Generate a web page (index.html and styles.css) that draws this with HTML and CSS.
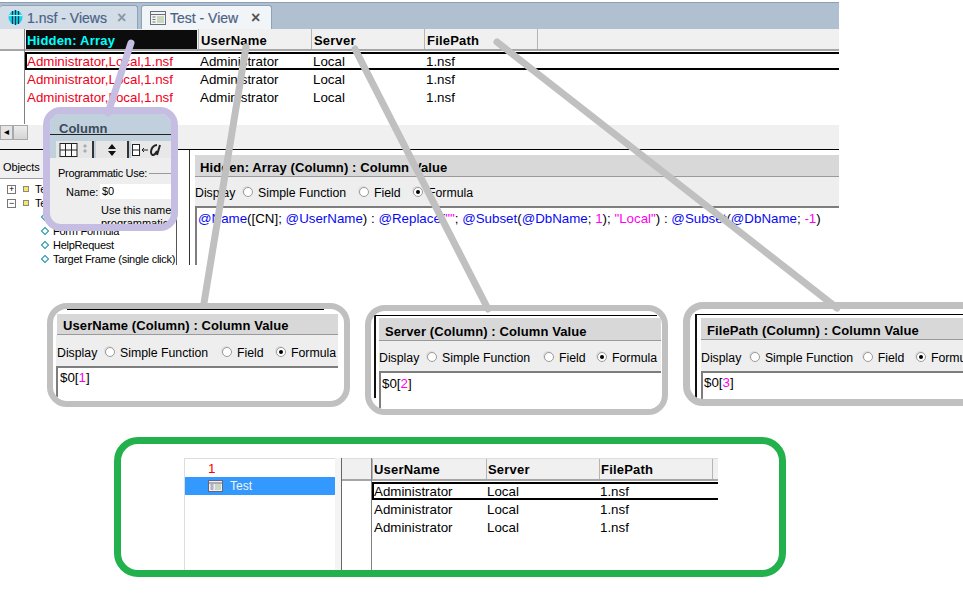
FILE: index.html
```html
<!DOCTYPE html>
<html lang="en">
<head>
<meta charset="utf-8">
<title>Test - View</title>
<link rel="stylesheet" href="styles.css">
</head>
<body>
<div class="page">
  <section class="window">
    <div class="tabbar">
      <div class="tab tab-a">
        <svg class="tab-icon" width="15" height="15" viewBox="0 0 15 15"><circle cx="7.500" cy="7.500" r="7" fill="#19d4e4"/><path d="M4.500 1v13M7.500 0v15M10.500 1v13" stroke="#08385c" stroke-width="1.300"/><path d="M1 5.500h13" stroke="#bff" stroke-width="1.200"/></svg>
        <span class="tab-label">1.nsf - Views</span><span class="tab-x">×</span>
      </div>
      <div class="tab tab-b">
        <svg class="tab-icon" width="16" height="14" viewBox="0 0 16 14"><rect x="0.500" y="0.500" width="15" height="13" fill="#f4f4f0" stroke="#666f80"/><path d="M1 3.500h14" stroke="#666f80"/><path d="M2.500 6h3M2.500 8.500h3M2.500 11h3" stroke="#777"/><rect x="7" y="5" width="7" height="7" fill="#c8d8c0"/></svg>
        <span class="tab-label">Test - View</span><span class="tab-x">×</span>
      </div>
    </div>
    <div class="view">
      <div class="grid-row head">
        <div class="head-gutter"></div>
        <div class="head-cell hidden-wrap"><span class="hidden-cell">Hidden: Array</span></div>
        <div class="head-cell">UserName</div>
        <div class="head-cell">Server</div>
        <div class="head-cell">FilePath</div>
        <div class="head-rest"></div>
      </div>
      <div class="rows">
        <div class="grid-row row selected"><div></div><div class="red">Administrator,Local,1.nsf</div><div>Administrator</div><div>Local</div><div>1.nsf</div><div></div></div>
        <div class="grid-row row"><div></div><div class="red">Administrator,Local,1.nsf</div><div>Administrator</div><div>Local</div><div>1.nsf</div><div></div></div>
        <div class="grid-row row"><div></div><div class="red">Administrator,Local,1.nsf</div><div>Administrator</div><div>Local</div><div>1.nsf</div><div></div></div>
      </div>
    </div>
    <div class="scrollstrip">
      <span class="sb-btn">◂</span><span class="sb-thumb"></span>
    </div>
    <div class="lower">
      <div class="objects">
        <div class="objects-tab">Objects</div>
        <div class="tree">
          <div class="tree-row"><span class="expander">+</span><span class="yellow"></span>Te</div>
          <div class="tree-row"><span class="expander">−</span><span class="yellow"></span>Te</div>
          <div class="tree-row leaf"><span class="diamond"></span>programmatic</div>
          <div class="tree-row leaf"><span class="diamond"></span>Form Formula</div>
          <div class="tree-row leaf"><span class="diamond"></span>HelpRequest</div>
          <div class="tree-row leaf"><span class="diamond"></span>Target Frame (single click)</div>
        </div>
      </div>
      <div class="fpanel main-panel">
        <div class="ftitle">Hidden: Array (Column) : Column Value</div>
        <div class="fdisplay main-display">
          <span>Display</span>
          <span class="radio"></span><span>Simple Function</span>
          <span class="radio"></span><span>Field</span>
          <span class="radio on"></span><span>Formula</span>
        </div>
        <div class="feditor main-editor"><span class="kw">@Name</span>([CN]; <span class="kw">@UserName</span>) : <span class="kw">@Replace</span>(<span class="lit">""</span>; <span class="kw">@Subset</span>(<span class="kw">@DbName</span>; <span class="lit">1</span>); <span class="lit">"Local"</span>) : <span class="kw">@Subset</span>(<span class="kw">@DbName</span>; <span class="lit">-1</span>)</div>
      </div>
    </div>
    <aside class="popup">
      <div class="popup-title">Column</div>
      <div class="popup-tools">
        <span class="tool tool-a"><svg width="36" height="16" viewBox="0 0 36 16"><rect x="4" y="1.500" width="17" height="13" fill="#f8f8f8" stroke="#222"/><path d="M9.500 2v12M15.500 2v12M4 8h17" stroke="#222"/><path d="M29 2l2 2-2 2-2-2zM29 7l2 2-2 2-2-2z" fill="#aaa"/></svg></span>
        <span class="tool tool-b"><svg width="14" height="14" viewBox="0 0 14 14"><path d="M7 1l4 5H3zM7 13l4-5H3z" fill="#111"/></svg></span>
        <span class="tool tool-c"><svg width="40" height="16" viewBox="0 0 40 16"><rect x="1.500" y="2.500" width="7" height="11" fill="#fff" stroke="#222"/><path d="M2 8h6M17 8h-6M11 8l2-2M11 8l2 2" stroke="#222"/><path d="M26 3c-4 0-6 4-6 7s2 4 4 2l2-3M29 3l-3 10" stroke="#222" stroke-width="2" fill="none"/></svg></span>
      </div>
      <div class="popup-body">
        <div class="popup-legend"><span>Programmatic Use:</span><i></i></div>
        <div class="popup-name"><span>Name:</span><span class="name-input">$0</span></div>
        <div class="popup-help">Use this name<br>programmatic</div>
      </div>
    </aside>
  </section>

  <section class="callouts">
    <div class="callout c-user">
      <div class="rule"></div>
      <div class="fpanel">
        <div class="ftitle">UserName (Column) : Column Value</div>
        <div class="fdisplay"><span>Display</span><span class="radio"></span><span>Simple Function</span><span class="radio"></span><span>Field</span><span class="radio on"></span><span>Formula</span></div>
        <div class="feditor">$0[<span class="lit">1</span>]</div>
      </div>
    </div>
    <div class="callout c-server">
      <div class="rule"></div>
      <div class="fpanel">
        <div class="ftitle">Server (Column) : Column Value</div>
        <div class="fdisplay"><span>Display</span><span class="radio"></span><span>Simple Function</span><span class="radio"></span><span>Field</span><span class="radio on"></span><span>Formula</span></div>
        <div class="feditor">$0[<span class="lit">2</span>]</div>
      </div>
    </div>
    <div class="callout c-file">
      <div class="rule"></div>
      <div class="fpanel">
        <div class="ftitle">FilePath (Column) : Column Value</div>
        <div class="fdisplay"><span>Display</span><span class="radio"></span><span>Simple Function</span><span class="radio"></span><span>Field</span><span class="radio on"></span><span>Formula</span></div>
        <div class="feditor">$0[<span class="lit">3</span>]</div>
      </div>
    </div>
  </section>

  <section class="result">
    <div class="app">
      <div class="nav">
        <div class="nav-row nav-db">1</div>
        <div class="nav-row nav-sel">
          <svg width="15" height="12" viewBox="0 0 15 12"><rect x="0.500" y="0.500" width="14" height="11" fill="#eef" stroke="#667"/><path d="M1 3h13" stroke="#667"/><path d="M2.500 5h3M2.500 7h3M2.500 9h3" stroke="#777"/><rect x="7" y="4" width="6" height="6" fill="#c8d8c0"/></svg>
          <span>Test</span>
        </div>
      </div>
      <div class="splitter"></div>
      <div class="app-view">
        <div class="app-grid head">
          <div class="head-gutter"></div>
          <div class="head-cell">UserName</div>
          <div class="head-cell">Server</div>
          <div class="head-cell">FilePath</div>
          <div class="head-rest"></div>
        </div>
        <div class="rows">
          <div class="app-grid row selected"><div></div><div>Administrator</div><div>Local</div><div>1.nsf</div><div></div></div>
          <div class="app-grid row"><div></div><div>Administrator</div><div>Local</div><div>1.nsf</div><div></div></div>
          <div class="app-grid row"><div></div><div>Administrator</div><div>Local</div><div>1.nsf</div><div></div></div>
        </div>
      </div>
    </div>
  </section>

  <svg class="arrows" width="963" height="599" viewBox="0 0 963 599" aria-hidden="true">
    <path class="arrow-lilac" d="M131 43L108 113"/>
    <path class="arrow-gray" d="M246 47L204 303"/>
    <path class="arrow-gray" d="M355 49L488 309"/>
    <path class="arrow-gray" d="M497 42L837 308"/>
  </svg>
</div>
</body>
</html>
```
FILE: styles.css
```css
* { box-sizing: border-box; }
html, body { margin: 0; padding: 0; background: #fff; }
body { font-family: "Liberation Sans", Arial, sans-serif; font-size: 14px; color: #000; overflow: hidden; }
.page { position: relative; width: 963px; height: 599px; overflow: hidden; }

/* main window */
.window { position: relative; width: 839px; height: 265px; display: flex; flex-direction: column; }
.tabbar { height: 27px; margin-top: 2px; background: #b0c0d1; border-top: 1px solid #8ca0b4; display: flex; gap: 3px; align-items: flex-end; flex: none; }
.tab { height: 24px; border: 1px solid #8ea3b8; border-bottom: 0; border-radius: 3px 3px 0 0; display: flex; align-items: center; font-size: 14px; color: #4a6285; -webkit-text-stroke: 0.2px #4a6285; }
.tab-a { width: 138px; background: #d3dde8; padding-left: 8px; border-left: 0; }
.tab-b { width: 131px; background: #f2f5f8; padding-left: 8px; }
.tab-icon { flex: none; margin-right: 4px; }
.tab-label { flex: 1; }
.tab-x { font-size: 16px; font-weight: 700; color: #8b97a4; width: 20px; -webkit-text-stroke: 0; }
.tab-b .tab-x { color: #555; }

.view { height: 94px; flex: none; position: relative; }
.view::before { content: ""; position: absolute; left: 24px; top: 0; bottom: -1px; width: 1px; background: #808080; }
.grid-row { display: grid; grid-template-columns: 24px 174px 113px 113px 113px 1fr; }
.head { height: 22px; background: #f0f0f0; border-bottom: 2px solid #a6a6a6; font-weight: 700; font-size: 13px; }
.head-cell { border-left: 1px solid #b5b5b5; padding: 3px 0 0 1px; height: 20px; line-height: 18px; letter-spacing: 0.2px; }
.grid-row .head-cell { padding-left: 2px; }
.grid-row .hidden-wrap { padding: 1px 1px 0 1px; }
.head-gutter { background: #f0f0f0; }
.head-rest { border-left: 1px solid #b5b5b5; }
.hidden-cell { display: block; height: 19px; background: #0c0c0c; color: #0ff; padding: 2px 0 0 1px; }
.rows { padding-top: 1px; }
.row { height: 18px; line-height: 17px; font-size: 13.330px; }
.row > div { padding: 1px 0 0 1px; white-space: nowrap; overflow: hidden; }
.grid-row.row > div { padding-left: 2px; }
.grid-row.row > div:nth-child(2) { padding-left: 3px; }
.app-grid.row > div:nth-child(2) { padding-left: 2px; }
.row.selected { line-height: 14px; }
.row.selected > div:not(:first-child) { border-top: 2px solid #000; border-bottom: 2px solid #000; }
.grid-row.row.selected > div:nth-child(2) { border-left: 2px solid #000; margin-left: 1px; padding-left: 0; }
.red { color: #f00018; }

.scrollstrip { height: 25px; flex: none; margin-top: 2px; background: #f0f0f0; display: flex; align-items: flex-start; border-bottom: 1px solid #000; }
.sb-btn { width: 13px; height: 15px; background: #e4e4e4; border: 1px solid #a8a8a8; font-size: 10px; line-height: 12px; text-align: center; }
.sb-thumb { width: 15px; height: 15px; background: linear-gradient(#ececec, #d4d4d4); border: 1px solid #a8a8a8; }

.lower { flex: 1; display: flex; min-height: 0; overflow: hidden; }
.objects { width: 177px; flex: none; background: #f0f0f0; padding-top: 7px; display: flex; flex-direction: column; }
.objects-tab { width: 44px; height: 21px; padding-left: 3px; font-size: 11px; letter-spacing: -0.1px; line-height: 20px; }
.tree { flex: 1; background: #fff; border-top: 1px solid #a0a0a0; border-right: 1px solid #555; font-size: 11px; letter-spacing: -0.25px; padding-top: 3px; overflow: hidden; }
.tree-row { height: 14px; line-height: 14px; display: flex; align-items: center; padding-left: 7px; white-space: nowrap; }
.tree-row.leaf { padding-left: 41px; }
.expander { flex: none; width: 9px; height: 9px; border: 1px solid #777; font-size: 9px; line-height: 7px; text-align: center; margin-right: 7px; }
.yellow { flex: none; width: 6px; height: 6px; background: #f4e860; border: 1px solid #888; margin-right: 6px; }
.diamond { flex: none; width: 6px; height: 6px; transform: rotate(45deg); border: 1px solid #1590a8; margin: 0 5px 0 1px; background: #fff; }

/* formula panels */
.fpanel { display: flex; flex-direction: column; }
.ftitle { height: 21px; background: #d8d8d8; border-bottom: 1px solid #9a9a9a; font-weight: 700; font-size: 13px; line-height: 23px; padding-left: 6px; letter-spacing: 0.1px; white-space: nowrap; }
.fdisplay { height: 31px; background: #eee; display: flex; align-items: center; font-size: 12.300px; white-space: nowrap; padding-top: 4px; }
.fdisplay > span:nth-child(1) { width: 49px; }
.fdisplay > span:nth-child(3) { width: 102px; }
.fdisplay > span:nth-child(5) { width: 39px; }
.radio { flex: none; width: 10px; height: 10px; margin-right: 5px; border-radius: 50%; background: #fff; border: 1px solid #9a9a9a; box-shadow: -1px -1px 0 #ddd; position: relative; top: -1px; }
.radio.on::after { content: ""; position: absolute; left: 2px; top: 2px; width: 4px; height: 4px; border-radius: 50%; background: #000; }
.feditor { flex: 1; background: #fff; border-top: 2px solid #7d7d7d; border-left: 2px solid #7d7d7d; font-size: 13.330px; padding: 2px 0 0 1px; line-height: 16px; white-space: nowrap; }
.kw { color: #0808f0; }
.lit { color: #ff00f0; }

.main-panel { flex: 1; margin-left: 12px; padding-left: 5px; border-left: 1px solid #333; padding-top: 5px; }
.main-panel .ftitle { height: 22px; line-height: 25px; padding-left: 5px; }
.main-panel .fdisplay { height: 29px; padding-top: 3px; }
.main-display > span:nth-child(1) { width: 48px; }
.main-display > span:nth-child(3) { width: 101px; }
.main-display > span:nth-child(5) { width: 39px; }
.main-editor { padding: 2px 0 0 1px; line-height: 18px; }

/* popup over the window */
.popup { position: absolute; left: 43px; top: 107px; width: 135px; height: 124px; border: 7px solid #c5bde2; border-radius: 18px; overflow: hidden; background: #eee; }
.popup-title { height: 21px; background: #c0d0dc; border-bottom: 1px solid #222; padding-left: 9px; font-size: 13px; font-weight: 700; line-height: 30px; color: #3c4a5a; }
.popup-tools { height: 23px; background: #c0d0dc; display: flex; padding-top: 6px; gap: 2px; }
.tool { height: 17px; background: #e6e6e6; border-right: 2px solid #333; display: flex; align-items: center; justify-content: center; }
.tool-a { width: 41px; margin-left: 6px; }
.tool-b { width: 40px; }
.tool-c { width: 40px; border-right: 0; background: #e8e8e8; }
.popup-body { font-size: 11px; padding-top: 7px; }
.popup-legend { display: flex; align-items: center; padding-left: 8px; height: 16px; letter-spacing: -0.3px; }
.popup-legend i { flex: 1; height: 1px; background: #999; margin-left: 2px; }
.popup-name { display: flex; align-items: center; padding-left: 16px; margin-top: 3px; height: 15px; }
.popup-name span:first-child { width: 34px; }
.name-input { flex: 1; background: #fff; height: 15px; line-height: 15px; padding-left: 2px; }
.popup-help { padding-left: 51px; margin-top: 5px; line-height: 13px; white-space: nowrap; }

/* callouts */
.callouts { display: flex; align-items: flex-start; height: 172px; }
.callout { flex: none; border: 6px solid #c0c0c0; border-radius: 20px; overflow: hidden; background: #fff; position: relative; }
.rule { height: 1px; background: #000; }
.c-user { width: 303px; height: 104px; margin: 38px 0 0 47px; padding: 0 6px 0 3px; }
.c-user .rule { margin: 0 14px 4px 11px; }
.c-user .fdisplay { padding-left: 1px; }
.c-user .fdisplay > span:nth-child(1) { width: 48px; }
.c-server { width: 303px; height: 110px; margin: 40px 0 0 15px; padding: 4px 1px 0 8px; }
.c-server .rule { margin: 0 4px 2px -5px; }
.c-server::before { content: ""; position: absolute; left: 3px; top: 4px; bottom: 11px; width: 2px; background: #111; }
.c-server .fdisplay > span:nth-child(1) { width: 48px; }
.c-server .fdisplay > span:nth-child(5) { width: 38px; }
.c-file { width: 300px; height: 104px; margin: 37px 0 0 15px; border-width: 7px; padding: 5px 0 0 11px; }
.c-file .rule { margin: 0 0 3px -6px; }
.c-file::before { content: ""; position: absolute; left: 5px; top: 5px; bottom: 0; width: 2px; background: #111; }
.c-file .fdisplay > span:nth-child(1) { width: 50px; }
.c-file .fdisplay > span:nth-child(3) { width: 100px; }
.callout .fpanel { height: 100%; }
.c-user .fpanel { height: 83px; }
.c-server .fpanel { height: 95px; }
.c-file .fpanel { height: 88px; }
.c-server .ftitle { height: 23px; line-height: 27px; }
.c-server .fdisplay { height: 30px; }
.c-file .ftitle { height: 22px; line-height: 26px; }
.c-user .feditor { padding: 2px 0 0 2px; }
.c-server .feditor { padding: 3px 0 0 1px; }
.c-file .feditor { padding: 2px 0 0 1px; }
.c-user .ftitle { margin-left: 1px; }

/* result */
.result { width: 672px; height: 140px; margin-left: 114px; border: 7px solid #23b14d; border-radius: 24px; padding: 14px 0 0 63px; overflow: hidden; }
.app { width: 534px; height: 112px; display: flex; }
.nav { width: 151px; flex: none; border-top: 1px solid #ddd; border-left: 1px solid #ddd; font-size: 12px; }
.nav-row { height: 18px; padding-left: 23px; display: flex; align-items: center; }
.nav-db { color: #f00; font-size: 13.330px; }
.nav-sel { background: #3399ff; color: #f4f4f4; gap: 7px; }
.splitter { width: 7px; flex: none; background: #f4f4f4; border-right: 1px solid #666; }
.app-view { flex: 1; min-width: 0; position: relative; }
.app-view::before { content: ""; position: absolute; left: 29px; top: 0; bottom: 0; width: 1px; background: #808080; }
.app-grid { display: grid; grid-template-columns: 30px 114px 113px 113px 1fr; }
.app-view .head { border-top: 1px solid #ddd; height: 23px; }
.app-grid.row.selected > div:nth-child(2) { border-left: 2px solid #000; padding-left: 0; }
.app-view .head-cell { height: 20px; padding-top: 2px; }

/* annotation lines */
.arrows { position: absolute; left: 0; top: 0; pointer-events: none; }
.arrow-lilac { stroke: #c5bde2; stroke-width: 7; stroke-linecap: round; fill: none; }
.arrow-gray { stroke: #c0c0c0; stroke-width: 7; stroke-linecap: round; fill: none; }
```
